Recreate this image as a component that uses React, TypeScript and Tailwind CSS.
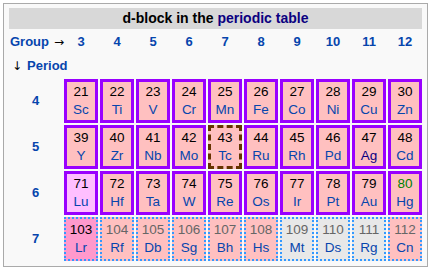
import React from 'react'

type El = { n: number; s: string; kind?: 'lan' | 'act' | 'unk'; border?: 'solid' | 'dash' | 'dot'; num?: string; sym?: string }

const ROWS: { period: number; els: El[] }[] = [
    {
        period: 4,
        els: [
            { n: 21, s: 'Sc' }, { n: 22, s: 'Ti' }, { n: 23, s: 'V' }, { n: 24, s: 'Cr' }, { n: 25, s: 'Mn' },
            { n: 26, s: 'Fe' }, { n: 27, s: 'Co' }, { n: 28, s: 'Ni' }, { n: 29, s: 'Cu' }, { n: 30, s: 'Zn' },
        ],
    },
    {
        period: 5,
        els: [
            { n: 39, s: 'Y' }, { n: 40, s: 'Zr' }, { n: 41, s: 'Nb' }, { n: 42, s: 'Mo' }, { n: 43, s: 'Tc', border: 'dash' },
            { n: 44, s: 'Ru' }, { n: 45, s: 'Rh' }, { n: 46, s: 'Pd' }, { n: 47, s: 'Ag', sym: 'text-[#0b0080]' }, { n: 48, s: 'Cd' },
        ],
    },
    {
        period: 6,
        els: [
            { n: 71, s: 'Lu', kind: 'lan' }, { n: 72, s: 'Hf' }, { n: 73, s: 'Ta' }, { n: 74, s: 'W' }, { n: 75, s: 'Re' },
            { n: 76, s: 'Os' }, { n: 77, s: 'Ir' }, { n: 78, s: 'Pt' }, { n: 79, s: 'Au' }, { n: 80, s: 'Hg', num: 'text-[#008000]' },
        ],
    },
    {
        period: 7,
        els: [
            { n: 103, s: 'Lr', kind: 'act', border: 'dot' },
            { n: 104, s: 'Rf', border: 'dot', num: 'text-[#666]' },
            { n: 105, s: 'Db', border: 'dot', num: 'text-[#666]' },
            { n: 106, s: 'Sg', border: 'dot', num: 'text-[#666]' },
            { n: 107, s: 'Bh', border: 'dot', num: 'text-[#666]' },
            { n: 108, s: 'Hs', border: 'dot', num: 'text-[#666]' },
            { n: 109, s: 'Mt', kind: 'unk', border: 'dot', num: 'text-[#666]' },
            { n: 110, s: 'Ds', kind: 'unk', border: 'dot', num: 'text-[#666]' },
            { n: 111, s: 'Rg', kind: 'unk', border: 'dot', num: 'text-[#666]' },
            { n: 112, s: 'Cn', border: 'dot', num: 'text-[#666]' },
        ],
    },
]

const GROUPS = [3, 4, 5, 6, 7, 8, 9, 10, 11, 12]

function Cell({ el }: { el: El }) {
    const bg = el.kind === 'lan' ? 'bg-[#ffbfff]' : el.kind === 'act' ? 'bg-[#ff99cc]' : el.kind === 'unk' ? 'bg-[#e8e8e8]' : 'bg-[#ffc0c0]'
    const border =
        el.border === 'dash'
            ? 'border-[3px] border-dashed border-[#663300]'
            : el.border === 'dot'
              ? 'border-2 border-dotted border-[#3399ff]'
              : 'border-[3px] border-solid border-[#9900ff]'
    return (
        <div className={`h-[44px] flex flex-col items-center justify-center text-[13.5px] ${bg} ${border}`}>
            <div className={`leading-[18px] ${el.num ?? 'text-black'}`}>{el.n}</div>
            <div className={`leading-[18px] ${el.sym ?? 'text-[#0645ad]'}`}>{el.s}</div>
        </div>
    )
}

export default function App() {
    return (
        <div className="w-[430px] h-[269px] bg-white pt-[3px] pl-[3px] font-['Liberation_Sans',Arial,sans-serif]">
            <div className="w-[425px] h-[264px] border border-[#aaaaaa] bg-[#f9f9f9] px-[5px] pt-[4px]">
                <div className="grid grid-cols-[53px_repeat(10,34px)] gap-[2px]">
                    {/* Title */}
                    <div className="col-span-11 h-[21px] bg-[#d8d8d8] flex items-center justify-center text-[14px] font-bold text-black">
                        d-block in the&nbsp;<span className="text-[#0b0080]">periodic table</span>
                    </div>

                    {/* Group row */}
                    <div className="h-[22px] flex items-center text-[13px] font-bold pl-px whitespace-nowrap">
                        <span className="text-[#0645ad]">Group</span>
                        <span className="text-black ml-[5px] font-['DejaVu_Sans'] font-normal text-[12px]">→</span>
                    </div>
                    {GROUPS.map((g) => (
                        <div key={g} className="h-[22px] flex items-center justify-center text-[13px] font-bold text-[#0645ad]">
                            {g}
                        </div>
                    ))}

                    {/* Period row */}
                    <div className="col-span-11 h-[22px] flex items-center text-[13px] font-bold pl-[3px]">
                        <span className="text-black font-['DejaVu_Sans'] font-normal text-[12px] mr-[5px]">↓</span>
                        <span className="text-[#0645ad]">Period</span>
                    </div>

                    {ROWS.map((row) => (
                        <React.Fragment key={row.period}>
                            <div className="h-[44px] flex items-center justify-center text-[13px] font-bold text-[#0645ad]">
                                {row.period}
                            </div>
                            {row.els.map((el) => (
                                <Cell key={el.n} el={el} />
                            ))}
                        </React.Fragment>
                    ))}
                </div>
            </div>
        </div>
    )
}
